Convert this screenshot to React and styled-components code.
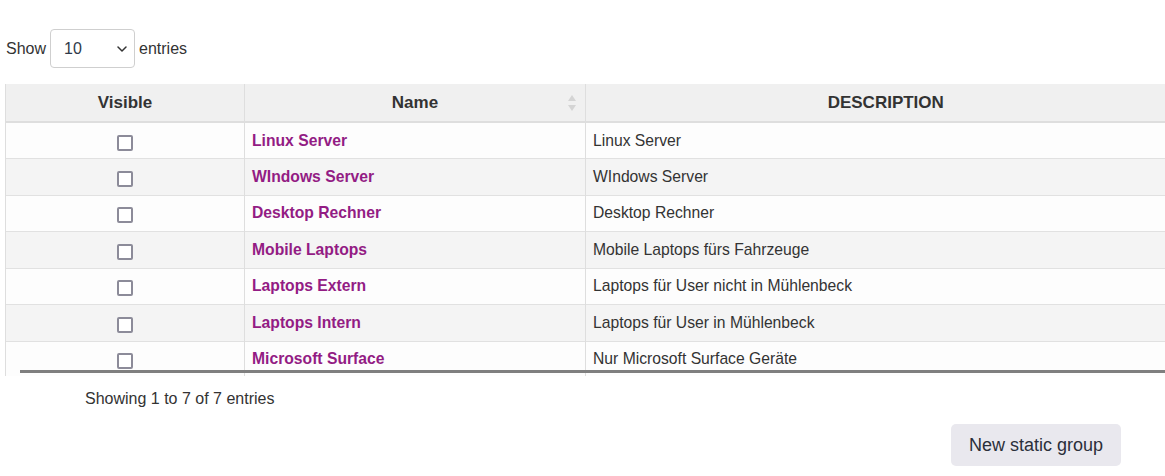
import React from "react";
import styled, { createGlobalStyle } from "styled-components";

const GlobalStyle = createGlobalStyle`
  body {
    margin: 0;
    background: #ffffff;
    font-family: "Liberation Sans", Arial, sans-serif;
    color: #333333;
  }
`;

const Page = styled.div`
  padding: 29px 0 0 5px;
  width: 1160px;
  overflow: hidden;
`;

const LengthBar = styled.div`
  display: flex;
  align-items: center;
  gap: 4px;
  font-size: 16px;
  color: #333;
  margin-left: 1px;
  height: 39px;
`;

const SelectBox = styled.div`
  width: 85px;
  height: 39px;
  box-sizing: border-box;
  border: 1px solid #cfcfcf;
  border-radius: 4px;
  display: flex;
  align-items: center;
  justify-content: space-between;
  padding: 0 4px 0 13px;
  color: #2f3a4a;
`;

const ScrollArea = styled.div`
  position: relative;
  margin-top: 16px;
  height: 292px;
  overflow: hidden;
`;

const ScrollThumb = styled.div`
  position: absolute;
  left: 15px;
  right: 0;
  bottom: 3px;
  height: 3px;
  background: #7f7f7f;
`;

const Table = styled.table`
  width: 1180px;
  border-collapse: collapse;
  table-layout: fixed;
`;

const HeadCell = styled.th`
  background: #f0f0f0;
  height: 37px;
  padding: 0;
  font-size: 17px;
  font-weight: bold;
  color: #333;
  text-align: center;
  border-left: 1px solid #dedede;
  border-bottom: 2px solid #dedede;
  position: relative;
  width: ${(p) => p.$w}px;
`;

const SortIcon = styled.svg`
  position: absolute;
  right: 8px;
  top: 50%;
  transform: translateY(-50%);
`;

const Row = styled.tr`
  background: ${(p) => (p.$odd ? "#fdfdfd" : "#f4f4f4")};
  height: 36.5px;
  border-bottom: 1px solid #e1e1e1;
`;

const Cell = styled.td`
  border-left: 1px solid #dedede;
  padding: 0 7px;
  font-size: 15.7px;
  text-align: ${(p) => (p.$center ? "center" : "left")};
  vertical-align: middle;
  white-space: nowrap;
`;

const NameLink = styled.a`
  color: #931c84;
  font-weight: bold;
  text-decoration: none;
`;

const Check = styled.span`
  display: inline-block;
  width: 12px;
  height: 12px;
  border: 2px solid #8c8b99;
  border-radius: 2px;
  background: #fff;
  vertical-align: middle;
  margin-top: 4px;
`;

const Info = styled.div`
  font-size: 16px;
  color: #333;
  padding: 14px 0 0 80px;
`;

const Actions = styled.div`
  display: flex;
  justify-content: flex-end;
  padding: 16px 44px 0 0;
`;

const Button = styled.button`
  height: 42px;
  padding: 0 18px;
  border: none;
  border-radius: 5px;
  background: #e9e8ee;
  color: #2b2f3a;
  font-family: "Liberation Sans", Arial, sans-serif;
  font-size: 18px;
  cursor: pointer;
`;

const groups = [
  ["Linux Server", "Linux Server"],
  ["WIndows Server", "WIndows Server"],
  ["Desktop Rechner", "Desktop Rechner"],
  ["Mobile Laptops", "Mobile Laptops fürs Fahrzeuge"],
  ["Laptops Extern", "Laptops für User nicht in Mühlenbeck"],
  ["Laptops Intern", "Laptops für User in Mühlenbeck"],
  ["Microsoft Surface", "Nur Microsoft Surface Geräte"],
];

export default function App() {
  return (
    <>
      <GlobalStyle />
      <Page>
        <LengthBar>
          Show
          <SelectBox>
            <span>10</span>
            <svg width="16" height="16" viewBox="0 0 16 16">
              <path d="M4 6l4 4 4-4" fill="none" stroke="#333" strokeWidth="1.5" strokeLinecap="round" strokeLinejoin="round" />
            </svg>
          </SelectBox>
          entries
        </LengthBar>
        <ScrollArea>
          <Table>
            <colgroup>
              <col style={{ width: 239 }} />
              <col style={{ width: 341 }} />
              <col style={{ width: 600 }} />
            </colgroup>
            <thead>
              <tr>
                <HeadCell>Visible</HeadCell>
                <HeadCell>
                  Name
                  <SortIcon width="10" height="18" viewBox="0 0 10 18">
                    <path d="M5 1l4 6H1z" fill="#d4d4d4" />
                    <path d="M5 17l4-6H1z" fill="#d4d4d4" />
                  </SortIcon>
                </HeadCell>
                <HeadCell>DESCRIPTION</HeadCell>
              </tr>
            </thead>
            <tbody>
              {groups.map(([name, desc], i) => (
                <Row key={name} $odd={i % 2 === 0}>
                  <Cell $center>
                    <Check />
                  </Cell>
                  <Cell>
                    <NameLink href="#">{name}</NameLink>
                  </Cell>
                  <Cell>{desc}</Cell>
                </Row>
              ))}
            </tbody>
          </Table>
          <ScrollThumb />
        </ScrollArea>
        <Info>Showing 1 to 7 of 7 entries</Info>
        <Actions>
          <Button>New static group</Button>
        </Actions>
      </Page>
    </>
  );
}
